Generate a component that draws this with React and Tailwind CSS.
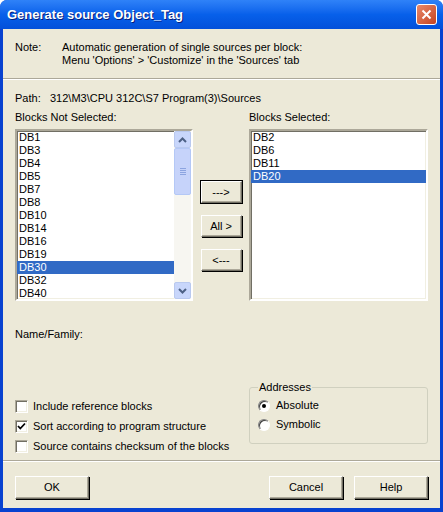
import React from 'react'

const notSelected = ['DB1', 'DB3', 'DB4', 'DB5', 'DB7', 'DB8', 'DB10', 'DB14', 'DB16', 'DB19', 'DB30', 'DB32', 'DB40']
const selected = ['DB2', 'DB6', 'DB11', 'DB20']

const raised =
    'bg-[#ECE9D8] border border-t-white border-l-white border-r-[#716F64] border-b-[#716F64] shadow-[1px_1px_0_#000,inset_-1px_-1px_0_#ACA899]'
const sunken =
    'bg-white border-2 border-t-[#ACA899] border-l-[#ACA899] border-r-white border-b-white shadow-[inset_1px_1px_0_#716F64,inset_-1px_-1px_0_#F1EFE2]'

function ListRow({ label, active }) {
    return (
        <div className={`h-[13px] leading-[13px] pl-[2px] ${active ? 'bg-[#316AC5] text-white' : 'text-black'}`}>
            {label}
        </div>
    )
}

function ScrollArrow({ down }) {
    return (
        <div className="h-[17px] w-[17px] rounded-[2px] border border-[#B9C9EF] bg-[#C8D6FB] flex items-center justify-center">
            <svg width="9" height="6" viewBox="0 0 9 6">
                <path
                    d={down ? 'M1 1 L4.5 4.5 L8 1' : 'M1 5 L4.5 1.5 L8 5'}
                    stroke="#4D6185"
                    strokeWidth="2"
                    fill="none"
                />
            </svg>
        </div>
    )
}

function MoveButton({ label, isDefault }) {
    return (
        <button
            className={`h-[22px] w-[41px] text-[11px] flex items-center justify-center ${raised} ${
                isDefault ? 'outline outline-1 outline-black' : ''
            }`}
        >
            {label}
        </button>
    )
}

function CheckRow({ label, checked }) {
    return (
        <div className="h-[20px] flex items-center">
            <div className={`w-[13px] h-[13px] flex items-center justify-center ${sunken} border-[1.5px]`}>
                {checked && (
                    <svg width="9" height="9" viewBox="0 0 9 9">
                        <path d="M1 4 L3.3 6.5 L8 1.5" stroke="#000" strokeWidth="1.8" fill="none" />
                    </svg>
                )}
            </div>
            <span className="ml-[5px]">{label}</span>
        </div>
    )
}

function RadioRow({ label, checked }) {
    return (
        <div className="h-[19px] flex items-center">
            <div className="w-[12px] h-[12px] rounded-full bg-white border border-t-[#808080] border-l-[#808080] border-r-white border-b-white shadow-[inset_1px_1px_0_#404040] flex items-center justify-center">
                {checked && <div className="w-[4px] h-[4px] rounded-full bg-black" />}
            </div>
            <span className="ml-[6px]">{label}</span>
        </div>
    )
}

function DialogButton({ label }) {
    return (
        <button className={`h-[23px] w-[74px] text-[11px] flex items-center justify-center ${raised}`}>{label}</button>
    )
}

export default function App() {
    return (
        <div
            className="w-[443px] h-[512px] flex flex-col bg-[#0842D0] rounded-t-[7px] overflow-hidden text-[11px] text-black"
            style={{ fontFamily: '"Liberation Sans", Arial, sans-serif' }}
        >
            <div className="h-[29px] shrink-0 flex items-center justify-between pl-[7px] pr-[6px] bg-gradient-to-b from-[#2F82F8] via-[#0760EA] to-[#0350DA]">
                <span className="text-white font-bold text-[13px] [text-shadow:1px_1px_0_#0A1E7A]">
                    Generate source Object_Tag
                </span>
                <div className="w-[21px] h-[21px] rounded-[3px] border border-white bg-gradient-to-br from-[#E8896A] to-[#C4411C] flex items-center justify-center">
                    <svg width="11" height="11" viewBox="0 0 11 11">
                        <path d="M1.5 1.5 L9.5 9.5 M9.5 1.5 L1.5 9.5" stroke="#fff" strokeWidth="2" />
                    </svg>
                </div>
            </div>

            <div className="flex-1 mx-[3px] mb-[4px] bg-[#ECE9D8] flex flex-col">
                <div className="flex pl-[12px] pt-[12px] leading-[13px]">
                    <div className="w-[47px]">Note:</div>
                    <div>
                        <div>Automatic generation of single sources per block:</div>
                        <div>Menu 'Options' &gt; 'Customize' in the 'Sources' tab</div>
                    </div>
                </div>

                <div className="mt-[11px] border-t border-[#ACA899] border-b border-b-white" />

                <div className="pl-[12px] mt-[12px] leading-[13px] flex">
                    <span className="w-[35px]">Path:</span>
                    <span>312\M3\CPU 312C\S7 Program(3)\Sources</span>
                </div>

                <div className="flex pl-[12px] mt-[6px]">
                    <div className="flex flex-col">
                        <div className="leading-[13px] mb-[5px]">Blocks Not Selected:</div>
                        <div className={`w-[178px] h-[172px] flex ${sunken}`}>
                            <div className="flex-1">
                                {notSelected.map((b) => (
                                    <ListRow key={b} label={b} active={b === 'DB30'} />
                                ))}
                            </div>
                            <div className="w-[17px] bg-[#F7F6F1] flex flex-col">
                                <ScrollArrow />
                                <div className="h-[47px] w-[17px] rounded-[2px] border border-[#B4C8F6] bg-[#C6D3FA] flex items-center justify-center">
                                    <div className="flex flex-col gap-[1px]">
                                        <div className="w-[6px] h-[1px] bg-[#8CA4E0]" />
                                        <div className="w-[6px] h-[1px] bg-[#8CA4E0]" />
                                        <div className="w-[6px] h-[1px] bg-[#8CA4E0]" />
                                        <div className="w-[6px] h-[1px] bg-[#8CA4E0]" />
                                    </div>
                                </div>
                                <div className="flex-1" />
                                <ScrollArrow down />
                            </div>
                        </div>
                    </div>

                    <div className="w-[56px] flex flex-col items-center pt-[70px] gap-[12px]">
                        <MoveButton label="--->" isDefault />
                        <MoveButton label="All >" />
                        <MoveButton label="<---" />
                    </div>

                    <div className="flex flex-col">
                        <div className="leading-[13px] mb-[5px]">Blocks Selected:</div>
                        <div className={`w-[179px] h-[172px] ${sunken}`}>
                            {selected.map((b) => (
                                <ListRow key={b} label={b} active={b === 'DB20'} />
                            ))}
                        </div>
                    </div>
                </div>

                <div className="pl-[12px] mt-[27px] leading-[13px]">Name/Family:</div>

                <div className="h-[79px] flex pl-[12px] mt-[40px]">
                    <div className="w-[234px] flex flex-col pt-[15px]">
                        <CheckRow label="Include reference blocks" />
                        <CheckRow label="Sort according to program structure" checked />
                        <CheckRow label="Source contains checksum of the blocks" />
                    </div>
                    <div className="w-[179px] h-[57px] mt-[6px] border border-[#D0D0BF] rounded-[3px] pl-[8px] flex flex-col">
                        <div className="-mt-[7px] w-fit px-[1px] bg-[#ECE9D8] leading-[13px]">Addresses</div>
                        <div className="mt-[2px]">
                            <RadioRow label="Absolute" checked />
                            <RadioRow label="Symbolic" />
                        </div>
                    </div>
                </div>

                <div className="border-t border-[#ACA899] border-b border-b-white" />

                <div className="flex pl-[12px] pr-[12px] mt-[14px]">
                    <DialogButton label="OK" />
                    <div className="flex-1" />
                    <DialogButton label="Cancel" />
                    <div className="w-[11px]" />
                    <DialogButton label="Help" />
                </div>
            </div>
        </div>
    )
}
